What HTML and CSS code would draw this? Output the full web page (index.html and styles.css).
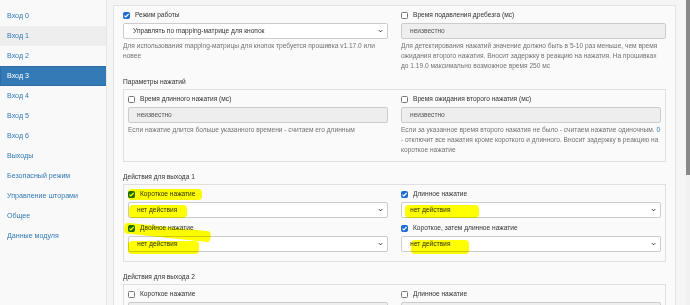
FILE: index.html
```html
<!DOCTYPE html>
<html lang="ru">
<head>
  <meta charset="UTF-8" />
  <title>Настройки входа</title>
  <link rel="stylesheet" href="styles.css">
</head>
<body>

<div class="layout">
  <aside class="sidebar">
    <a class="nav-item">Вход 0</a>
    <a class="nav-item hover">Вход 1</a>
    <a class="nav-item">Вход 2</a>
    <a class="nav-item active">Вход 3</a>
    <a class="nav-item">Вход 4</a>
    <a class="nav-item">Вход 5</a>
    <a class="nav-item">Вход 6</a>
    <a class="nav-item">Выходы</a>
    <a class="nav-item">Безопасный режим</a>
    <a class="nav-item">Управление шторами</a>
    <a class="nav-item">Общее</a>
    <a class="nav-item">Данные модуля</a>
  </aside>

  <main class="main">
    <div class="panel">
      <div class="row top">
        <div class="field">
          <label class="check"><span class="cb checked"></span>Режим работы</label>
          <div class="select select-wide">Управлять по mapping-матрице для кнопок
            <svg class="chevron" viewBox="0 0 6 4"><path d="M1 1l2 2 2-2"/></svg>
          </div>
          <p class="help">Для использования mapping-матрицы для кнопок требуется прошивка v1.17.0 или новее</p>
        </div>
        <div class="field">
          <label class="check"><span class="cb"></span>Время подавления дребезга (мс)</label>
          <div class="input">неизвестно</div>
          <p class="help">Для детектирования нажатий значение должно быть в 5-10 раз меньше, чем время ожидания второго нажатия. Вносит задержку в реакцию на нажатия. На прошивках до 1.19.0 максимально возможное время 250 мс</p>
        </div>
      </div>

      <h4 class="group-title first">Параметры нажатий</h4>
      <div class="group">
        <div class="row inner">
          <div class="field">
            <label class="check"><span class="cb"></span>Время длинного нажатия (мс)</label>
            <div class="input">неизвестно</div>
            <p class="help">Если нажатие длится больше указанного времени - считаем его длинным</p>
          </div>
          <div class="field">
            <label class="check"><span class="cb"></span>Время ожидания второго нажатия (мс)</label>
            <div class="input">неизвестно</div>
            <p class="help">Если за указанное время второго нажатия не было - считаем нажатие одиночным. <span class="num">0</span> - отключит все нажатия кроме короткого и длинного. Вносит задержку в реакцию на короткое нажатие</p>
          </div>
        </div>
      </div>

      <h4 class="group-title">Действия для выхода 1</h4>
      <div class="group actions">
        <div class="row inner">
          <div class="col">
            <div class="field">
              <label class="check"><span class="cb checked"></span>Короткое нажатие</label>
              <div class="select">нет действия
                <svg class="chevron" viewBox="0 0 6 4"><path d="M1 1l2 2 2-2"/></svg>
              </div>
              <span class="mark mark-a"></span>
              <span class="mark mark-b"></span>
            </div>
            <div class="field">
              <label class="check"><span class="cb checked"></span>Двойное нажатие</label>
              <div class="select">нет действия
                <svg class="chevron" viewBox="0 0 6 4"><path d="M1 1l2 2 2-2"/></svg>
              </div>
              <span class="mark mark-c"></span>
              <span class="mark mark-d"></span>
            </div>
          </div>
          <div class="col">
            <div class="field">
              <label class="check"><span class="cb checked"></span>Длинное нажатие</label>
              <div class="select">нет действия
                <svg class="chevron" viewBox="0 0 6 4"><path d="M1 1l2 2 2-2"/></svg>
              </div>
              <span class="mark mark-e"></span>
            </div>
            <div class="field">
              <label class="check"><span class="cb checked"></span>Короткое, затем длинное нажатие</label>
              <div class="select">нет действия
                <svg class="chevron" viewBox="0 0 6 4"><path d="M1 1l2 2 2-2"/></svg>
              </div>
              <span class="mark mark-f"></span>
            </div>
          </div>
        </div>
      </div>

      <h4 class="group-title">Действия для выхода 2</h4>
      <div class="group actions">
        <div class="row inner">
          <div class="field">
            <label class="check"><span class="cb"></span>Короткое нажатие</label>
            <div class="input"></div>
          </div>
          <div class="field">
            <label class="check"><span class="cb"></span>Длинное нажатие</label>
            <div class="input"></div>
          </div>
        </div>
      </div>
    </div>
  </main>

  <div class="scrollbar"><div class="thumb"></div></div>
</div>

</body>
</html>
```

FILE: styles.css
```css
* {
  box-sizing: border-box;
  margin: 0;
  padding: 0;
}

body {
  font-family: 'Liberation Sans', Arial, sans-serif;
  font-size: 6.6px;
  line-height: 10px;
  color: #333;
  background: #f5f5f5;
  overflow: hidden;
}

.layout {
  display: flex;
  height: 100vh;
  overflow: hidden;
}

/* left menu */

.sidebar {
  width: 107px;
  flex-shrink: 0;
  padding-top: 6px;
  background: #f9f9f9;
  border-right: 1px solid #e6e6e6;
  display: flex;
  flex-direction: column;
}

.nav-item {
  display: block;
  height: 20px;
  padding-left: 6px;
  font-size: 7.1px;
  line-height: 18px;
  color: #337ab7;
  border: 1px solid transparent;
  border-right: none;
}

.nav-item.hover {
  background: #eee;
}

.nav-item.active {
  background: #337ab7;
  border-color: #2e6da4;
  color: #fff;
}

/* main area */

.main {
  flex: 1;
  padding: 5px 10px 0 6px;
}

.panel {
  background: #fafafa;
  border: 1px solid #e3e3e3;
  padding: 4px 9px 20px 9px;
}

.row {
  display: grid;
  grid-template-columns: 1fr 1fr;
  column-gap: 13px;
}

.row.top .help {
  padding-right: 4px;
}

.field {
  position: relative;
}

.check {
  display: flex;
  align-items: center;
  gap: 5px;
  height: 10px;
  margin-bottom: 3px;
  white-space: nowrap;
}

.cb {
  width: 7px;
  height: 7px;
  flex-shrink: 0;
  border: 1px solid #767676;
  border-radius: 1.5px;
  background: #fff;
}

.cb.checked {
  border-color: #1e6bd6;
  background: #1e6bd6 url("data:image/svg+xml,%3Csvg xmlns='http://www.w3.org/2000/svg' viewBox='0 0 7 7'%3E%3Cpath d='M1.4 3.6l1.4 1.4 2.8-3' fill='none' stroke='%23fff' stroke-width='1.2'/%3E%3C/svg%3E") center / 7px 7px no-repeat;
}

.select,
.input {
  position: relative;
  height: 16px;
  line-height: 14px;
  padding-left: 8px;
  border: 1px solid #ccc;
  border-radius: 2px;
  background: #fff;
  white-space: nowrap;
}

.select-wide {
  padding-left: 9px;
}

.input {
  background: #eee;
  color: #555;
}

.chevron {
  position: absolute;
  right: 4px;
  top: 5px;
  width: 5px;
  height: 4px;
  fill: none;
  stroke: #333;
  stroke-width: 1.2;
}

.help {
  margin-top: 2px;
  color: #737373;
}

.help .num {
  color: #337ab7;
}

.group-title {
  font-weight: normal;
  font-size: 6.6px;
  margin: 10px 0 2px;
}

.group-title.first {
  margin-top: 6px;
}

.group {
  background: #fafafa;
  border: 1px solid #e0e0e0;
  padding: 4px 4px 6px 4px;
}

.group.actions {
  padding: 4px 4px 9px 4px;
}

.col {
  display: flex;
  flex-direction: column;
  gap: 5px;
}

/* highlighter marks drawn over the screenshot */

.mark {
  position: absolute;
  background: #ffff00;
  mix-blend-mode: multiply;
  border-radius: 4px;
}

.mark-a { left: 0; top: 0; width: 74px; height: 11px; }
.mark-b { left: 1px; top: 16px; width: 58px; height: 13px; }
.mark-c { left: -4px; top: 4px; width: 87px; height: 11px; transform: rotate(6deg); }
.mark-d { left: 0; top: 18px; width: 71px; height: 13px; }
.mark-e { left: 4px; top: 16px; width: 74px; height: 13px; }
.mark-f { left: 10px; top: 17px; width: 58px; height: 14px; }

/* fake scrollbar of the page */

.scrollbar {
  width: 4px;
  flex-shrink: 0;
  background: #f1f1f1;
}

.thumb {
  height: 175px;
  background: #888;
}
```
